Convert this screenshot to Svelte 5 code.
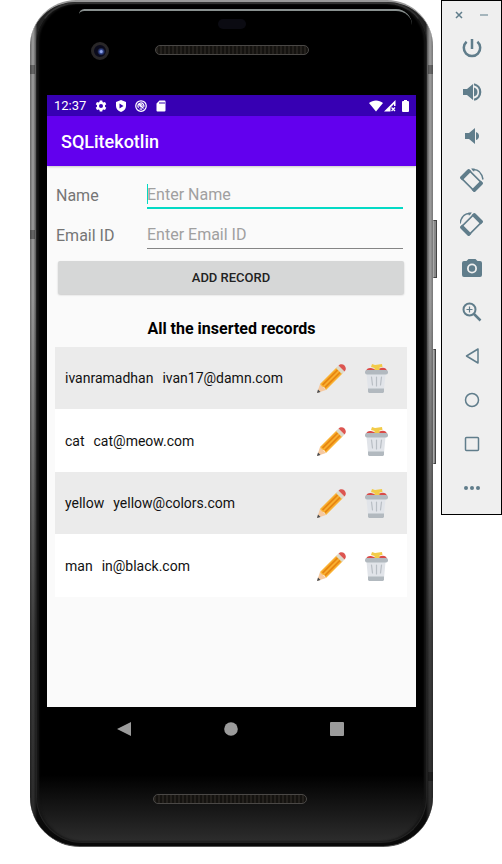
<script>
  let name = $state('');
  let email = $state('');
  let records = [
    { name: 'ivanramadhan', email: 'ivan17@damn.com' },
    { name: 'cat', email: 'cat@meow.com' },
    { name: 'yellow', email: 'yellow@colors.com' },
    { name: 'man', email: 'in@black.com' }
  ];
</script>

<main class="desktop">
  <section class="phone" aria-label="Phone emulator">
    <i class="key power-key"></i>
    <i class="key volume-key"></i>
    <i class="seam s1"></i>
    <i class="seam s2"></i>
    <i class="seam s3"></i>
    <i class="seam s4"></i>
    <div class="body">
      <div class="forehead">
        <span class="sensor"></span>
        <span class="lens"></span>
        <span class="speaker"></span>
      </div>

      <div class="screen">
        <div class="status">
          <span class="time">12:37</span>
          <svg viewBox="0 0 24 24"><path fill="#fff" fill-rule="evenodd" d="M9.5 1h5l.6 3.2 1.8 1 3.1-1.1 2.5 4.3-2.5 2.1v2.9l2.5 2.1-2.5 4.4-3.1-1.1-1.8 1-.6 3.2h-5l-.6-3.2-1.8-1L4 19.900l-2.500-4.400L4 13.400v-2.900L1.500 8.400 4 4.100l3.100 1.100 1.800-1zM12 8a4 4 0 1 0 0 8 4 4 0 0 0 0-8z"/></svg>
          <svg viewBox="0 0 24 24"><path fill="#fff" fill-rule="evenodd" d="M12 0 22 4v8c0 6-4 10-10 12C6 22 2 18 2 12V4zM9 7v10l8-5z"/></svg>
          <svg viewBox="0 0 24 24"><g fill="none" stroke="#fff"><circle cx="12" cy="12" r="10.500" stroke-width="2.500"/><path stroke-width="2.500" d="M7 15.500A6 6 0 1 1 17.500 14M7 7l10 10M9 17.500a6 6 0 0 0 5 .3"/><circle cx="12" cy="11.500" r="2.500" stroke-width="2"/></g></svg>
          <svg viewBox="0 0 24 24"><path fill="#fff" fill-rule="evenodd" d="M9 1h10a2 2 0 0 1 2 2v18a2 2 0 0 1-2 2H5a2 2 0 0 1-2-2V7zM9 4v4h2V4zm4 0v4h2V4zm4 0v4h2V4z"/></svg>
          <svg class="wifi" viewBox="0 0 28 24"><path fill="#fff" d="M14 23 0 6C8-1 20-1 28 6z"/></svg>
          <svg class="cell" viewBox="0 0 24 24"><path fill="#fff" fill-rule="evenodd" d="M0 23 23 0v12h-3V8l-7 7v8z"/><path stroke="#fff" stroke-width="2.500" d="m15 15 7 7m0-7-7 7"/></svg>
          <svg class="battery" viewBox="0 0 14 24"><path fill="#fff" d="M4 0h6v2h2q2 0 2 2v18q0 2-2 2H2q-2 0-2-2V4q0-2 2-2h2z"/></svg>
        </div>
        <header class="appbar"><h1>SQLitekotlin</h1></header>

        <form onsubmit={(e) => e.preventDefault()}>
          <div class="field active">
            <label for="name">Name</label>
            <input id="name" type="text" placeholder="Enter Name" bind:value={name} />
          </div>
          <div class="field">
            <label for="email">Email ID</label>
            <input id="email" type="text" placeholder="Enter Email ID" bind:value={email} />
          </div>
          <button class="add" type="submit">ADD RECORD</button>
        </form>

        <h2>All the inserted records</h2>
        <ul class="records">
          {#each records as record}
            <li>
              <span>{record.name}</span>
              <span class="mail">{record.email}</span>
              <button class="tool" aria-label="Edit {record.name}">
                <svg viewBox="0 0 30 30">
                  <path fill="#f6c9a0" d="m1 30 3-9 6 6z"/>
                  <path fill="#454a50" d="m1 30 1-3.500 2.500 2.500z"/>
                  <path fill="#f9b233" d="M4 21 20.500 4.500l6 6L10 27l-1.500-2.500L6 23.500z"/>
                  <path fill="none" stroke="#e88712" stroke-width="1.800" d="M6.500 22 21.500 7M9 24.500l15-15"/>
                  <path fill="#dcd9c9" d="m20 5 2.500-2.500 6 6L26 11z"/>
                  <path fill="#dc5550" d="M22.500 2.500c4-4 10 2 6 6z"/>
                </svg>
              </button>
              <button class="tool" aria-label="Delete {record.name}">
                <svg viewBox="0 0 30 30">
                  <path fill="#da4b48" d="M5 8q1-3.500 5-3l5 1.500L20 5q5-1 6 3z"/>
                  <path fill="#f2cb49" d="m11 1 3 1 7-1 .5 3-3 .5V8h-5V5L10 4z"/>
                  <path fill="#e1e4e9" d="M5.500 11h19L23 27H7z"/>
                  <rect x="4" y="7" width="23" height="4.500" rx="2" fill="#b2b9bf"/>
                  <path fill="#b2b9bf" d="M7 25.500h16V29l-1 1H8l-1-1z"/>
                  <path fill="none" stroke="#b8bec4" stroke-width="1.200" stroke-linecap="round" d="m10.500 14 1 8m4-8v9m5-9-1 8"/>
                </svg>
              </button>
            </li>
          {/each}
        </ul>
      </div>

      <nav class="navbar">
        <button aria-label="Back"><svg viewBox="0 0 16 16"><path fill="#9b9b9b" d="M15 1v14L1 8z"/></svg></button>
        <button aria-label="Home"><svg viewBox="0 0 16 16"><circle cx="8" cy="8" r="6.800" fill="#9b9b9b"/></svg></button>
        <button aria-label="Recents"><svg viewBox="0 0 16 16"><rect x="1" y="1" width="14" height="14" rx="1" fill="#9b9b9b"/></svg></button>
      </nav>
      <div class="chin"><span class="speaker"></span></div>
    </div>
  </section>

  <aside class="panel" aria-label="Emulator controls">
    <div class="window">
      <button aria-label="Close"><svg viewBox="0 0 8 8"><path d="m1 1 6 6m0-6L1 7"/></svg></button>
      <button aria-label="Minimize"><svg viewBox="0 0 8 8"><path class="dim" d="M0 4h8"/></svg></button>
    </div>
    <button aria-label="Power"><svg viewBox="0 0 24 24"><path stroke-width="2.500" d="M12 3v10M6.600 5.700a8.200 8.200 0 1 0 10.800 0"/></svg></button>
    <button aria-label="Volume up"><svg viewBox="0 0 24 24"><path class="fill" d="M3 9v6h4l6 5V4L7 9zM14 7.500v9q3.500-1 3.500-4.500T14 7.500z"/><path stroke-width="2.200" d="M14 4.200a8 8 0 0 1 0 15.600"/></svg></button>
    <button aria-label="Volume down"><svg viewBox="0 0 24 24"><path class="fill" d="M5 9v6h4l6 5V4L9 9zM16 8v8q3-1 3-4t-3-4z"/></svg></button>
    <button aria-label="Rotate left"><svg viewBox="0 0 24 24"><g transform="rotate(45 11.500 12.500)"><rect x="2" y="7" width="19" height="11" rx="1" stroke-width="1.500"/><path class="fill" d="M1 7.500q0-1.500 1.500-1.500H5v13H2.500Q1 19 1 17.500zM18 6h2.500Q22 6 22 7.500v10q0 1.500-1.500 1.500H18z"/></g><path stroke-width="1.500" d="M12 1.500q9-1 11 10"/><path class="fill" d="m11 .5 4 .3-1 3z"/></svg></button>
    <button aria-label="Rotate right"><svg viewBox="0 0 24 24"><g transform="matrix(-1 0 0 1 23 0)"><g transform="rotate(45 11.500 12.500)"><rect x="2" y="7" width="19" height="11" rx="1" stroke-width="1.500"/><path class="fill" d="M1 7.500q0-1.500 1.500-1.500H5v13H2.500Q1 19 1 17.500zM18 6h2.500Q22 6 22 7.500v10q0 1.500-1.500 1.500H18z"/></g><path stroke-width="1.500" d="M12 1.500q9-1 11 10"/><path class="fill" d="m11 .5 4 .3-1 3z"/></g></svg></button>
    <button aria-label="Take screenshot"><svg viewBox="0 0 24 24"><path class="fill" fill-rule="evenodd" d="M8.500 3h7l2 2H20q2 0 2 2v12q0 2-2 2H4q-2 0-2-2V7q0-2 2-2h2.500zM12 7.500a5 5 0 1 0 0 10 5 5 0 0 0 0-10z"/><circle class="fill" cx="12" cy="12.500" r="3.200"/></svg></button>
    <button aria-label="Zoom"><svg viewBox="0 0 24 24"><circle cx="9.500" cy="9.500" r="6" stroke-width="2"/><path stroke-width="2.500" d="m14 14 6.500 6.500"/><path stroke-width="1.200" d="M9.500 6.500v6m-3-3h6"/></svg></button>
    <button aria-label="Back"><svg viewBox="0 0 24 24"><path stroke-width="1.500" stroke-linejoin="round" d="M18 5v14L6.500 12z"/></svg></button>
    <button aria-label="Home"><svg viewBox="0 0 24 24"><circle cx="12" cy="12" r="6.500" stroke-width="1.500"/></svg></button>
    <button aria-label="Overview"><svg viewBox="0 0 24 24"><rect x="5.500" y="5.500" width="13" height="13" rx="1" stroke-width="1.500"/></svg></button>
    <button aria-label="More"><svg viewBox="0 0 24 24"><g class="fill"><circle cx="6" cy="12" r="2"/><circle cx="12" cy="12" r="2"/><circle cx="18" cy="12" r="2"/></g></svg></button>
  </aside>
</main>

<style>
  :global(body) { margin: 0; background: #fff; }
  * { box-sizing: border-box; }
  button { border: 0; padding: 0; background: none; font: inherit; cursor: pointer; }
  svg { display: block; }

  .desktop {
    display: flex;
    align-items: flex-start;
    gap: 8px;
    padding: 0 0 18px 30px;
    font-family: Roboto, "Liberation Sans", sans-serif;
  }

  .phone {
    position: relative;
    flex: 1;
    min-width: 0;
    padding: 0 6px 3px;
    border-radius: 46px 46px 50px 50px;
    background:
      linear-gradient(#0000 0 35%, #0009 75%, #000b),
      linear-gradient(90deg, #666 0, #a0a0a0 3px, #555 6px, #222 7px, #222 calc(100% - 7px), #555 calc(100% - 6px), #a0a0a0 calc(100% - 3px), #777);
    border-bottom: 1px solid #555;
    border-top: 2px solid #999;
  }
  .body {
    border-radius: 40px 40px 46px 46px;
    border: 1px solid #222;
    border-top: 2px solid #333;
    padding: 0 10px;
    background: linear-gradient(#000 0 92%, #111 95%, #2d2d2d);
    box-shadow: inset 2px 0 2px #161616, inset -2px 0 2px #161616;
  }
  .key {
    position: absolute;
    left: 100%;
    width: 4px;
    background: #888;
    border: 1px solid #444;
    border-left-color: #aaa;
  }
  .power-key { top: 218px; height: 58px; }
  .volume-key { top: 347px; height: 115px; width: 3px; }
  .seam { position: absolute; width: 5px; height: 9px; background: #0005; }
  .s1 { left: 0; top: 63px; }
  .s2 { right: 0; top: 63px; }
  .s3 { left: 0; top: 228px; }
  .s4 { right: 0; top: 770px; }

  .forehead {
    position: relative;
    height: 91px;
    display: flex;
    justify-content: center;
    align-items: center;
  }
  .forehead::before {
    content: "";
    position: absolute;
    top: 5px;
    left: 32px;
    right: 4px;
    height: 14px;
    border-top: 2px solid #89908f;
    border-radius: 8px 24px 0 0;
  }
  .sensor {
    position: absolute;
    top: 15px;
    left: calc(50% - 14px);
    width: 28px;
    height: 10px;
    border-radius: 5px;
    background: #0b0b12;
  }
  .lens {
    position: absolute;
    top: 38px;
    left: 44px;
    width: 18px;
    height: 18px;
    border-radius: 50%;
    border: 3px solid #292728;
    background: radial-gradient(circle at 60% 55%, #91a5e8 0 1px, #344891 2px, #0a0a1b 4px);
  }
  .speaker {
    width: 154px;
    height: 10px;
    border-radius: 5px;
    border: 1px solid #4a4846;
    background: repeating-linear-gradient(90deg, #24211d 0 2px, #14120f 2px 4px);
  }

  .screen { min-height: 612px; background: #fafafa; }
  .status {
    height: 21px;
    display: flex;
    align-items: center;
    gap: 8px;
    padding: 0 7px;
    background: #3700b3;
    color: #fff;
  }
  .status svg { width: 12px; height: 12px; }
  .time { font-size: 13px; margin-right: 1px; }
  .status .wifi { width: 14px; margin-left: auto; }
  .status .cell { margin-left: -7px; }
  .status .battery { width: 7px; margin-left: -2px; }
  .appbar {
    height: 50px;
    display: flex;
    align-items: center;
    padding: 0 14px;
    background: #6200ee;
    color: #fff;
    box-shadow: 0 1px 2px #0003;
  }
  h1 { margin: 0; font-size: 18px; font-weight: 500; }

  form { display: flex; flex-direction: column; padding: 9px 12px 0 9px; }
  .field { display: flex; align-items: center; height: 40px; margin-right: 1px; color: #757575; font-size: 16px; }
  .field label { width: 91px; }
  .field input {
    flex: 1;
    min-width: 0;
    height: 28px;
    padding: 0;
    border: 0;
    border-bottom: 1px solid #858585;
    border-radius: 0;
    outline: 0;
    background: none;
    color: #222;
    font: inherit;
  }
  .field input::placeholder { color: #a0a0a0; opacity: 1; }
  .active input {
    border-bottom: 2px solid #03dac5;
    background: linear-gradient(#03dac5, #03dac5) 0 3px / 1px 20px no-repeat;
  }
  .add {
    height: 33px;
    margin: 6px 0 0 2px;
    border-radius: 2px;
    background: #d6d7d7;
    box-shadow: 0 1px 2px #0003;
    color: #222;
    font-size: 13px;
    font-weight: 500;
  }
  h2 { margin: 25px 0 8px; line-height: 20px; font-size: 16px; font-weight: 700; text-align: center; color: #000; }
  .records { list-style: none; margin: 0 9px 0 8px; padding: 0; }
  li {
    display: flex;
    align-items: center;
    height: 62px;
    padding: 0 16px 0 10px;
    background: #fff;
    color: #111;
    font-size: 14px;
  }
  li:nth-child(odd) { background: #ebebeb; }
  li:nth-child(even) { height: 63px; }
  .mail { flex: 1; margin-left: 9px; }
  .tool { width: 30px; height: 30px; }
  .tool + .tool { margin-left: 15px; }
  .tool svg { width: 30px; height: 30px; }

  .navbar { height: 44px; display: flex; justify-content: space-between; padding: 0 71px 0 69px; align-items: center; }
  .navbar svg { width: 16px; height: 16px; }
  .chin { height: 91px; display: flex; justify-content: center; align-items: center; padding: 4px 4px 0 0; }

  .panel {
    width: 61px;
    flex: none;
    display: flex;
    flex-direction: column;
    align-items: center;
    border: 1px solid #000;
    background: #efefef;
    padding-bottom: 4px;
  }
  .panel > button { width: 44px; height: 44px; display: grid; place-items: center; }
  .panel > button svg { width: 24px; height: 24px; }
  .panel svg { fill: none; stroke: #607d8b; }
  .panel .fill { fill: #607d8b; stroke: none; }
  .window { height: 25px; width: 100%; display: flex; justify-content: space-between; align-items: center; padding: 3px 13px 0 13px; }
  .window svg { width: 8px; height: 8px; stroke-width: 1.500; }
  .window .dim { stroke: #a5b5bc; stroke-width: 2; }
</style>
